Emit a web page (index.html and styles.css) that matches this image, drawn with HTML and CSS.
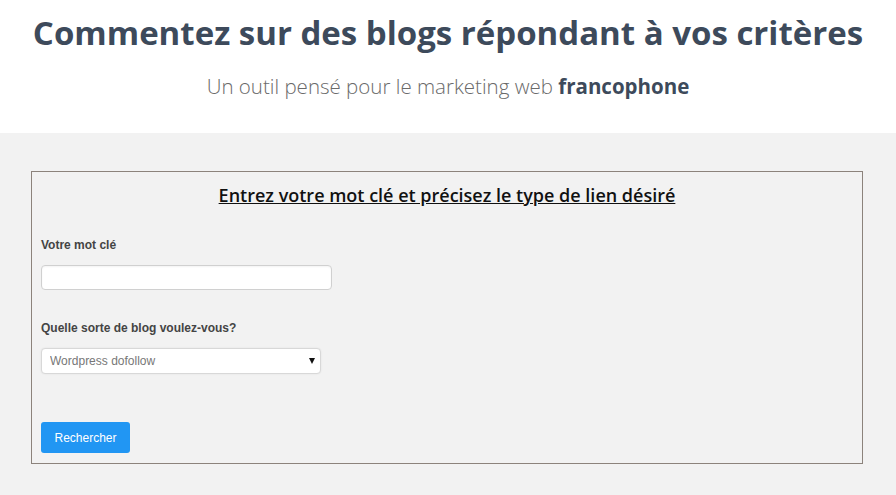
FILE: index.html
```html
<!DOCTYPE html>
<html>
<head>
    <title>Commentez sur des blogs</title>
    <link rel="stylesheet" href="styles.css">
</head>
<body>
    <header class="hero">
        <h1 class="hero-title">Commentez sur des blogs répondant à vos critères</h1>
        <p class="hero-sub">Un outil pensé pour le marketing web <strong>francophone</strong></p>
    </header>
    <main class="search-area">
        <form class="search-box">
            <h2 class="search-heading">Entrez votre mot clé et précisez le type de lien désiré</h2>
            <label class="field-label" for="keyword">Votre mot clé</label>
            <input type="text" id="keyword" class="field-input">
            <label class="field-label" for="blogType">Quelle sorte de blog voulez-vous?</label>
            <div class="select-wrap">
                <select id="blogType" class="field-select">
                    <option>Wordpress dofollow</option>
                    <option>Wordpress nofollow</option>
                </select>
            </div>
            <button type="button" class="search-button">Rechercher</button>
        </form>
    </main>
</body>
</html>
```

FILE: styles.css
```css
html, body {
    margin: 0;
    padding: 0;
}
body {
    background: #f2f2f2;
    font-family: "Open Sans", sans-serif;
}
.hero {
    background: #fff;
    height: 133px;
    text-align: center;
    padding-top: 10px;
    box-sizing: border-box;
}
.hero-title {
    margin: 0;
    font-size: 33px;
    font-weight: 700;
    color: #3d4a5b;
    line-height: 46px;
}
.hero-sub {
    margin: 16px 0 0;
    font-size: 20.5px;
    font-weight: 300;
    color: #6a6a6a;
    line-height: 28px;
}
.hero-sub strong {
    font-weight: 700;
    color: #3d4a5b;
}
.search-area {
    padding: 38px 33px 30px 31px;
}
.search-box {
    border: 1px solid #8c837c;
    padding: 10px 9px 10px;
    display: flex;
    flex-direction: column;
    align-items: flex-start;
    height: 271px;
}
.search-heading {
    align-self: stretch;
    text-align: center;
    margin: 0 0 30px;
    font-size: 18px;
    font-weight: 600;
    color: #111;
    text-decoration: underline;
    line-height: 26px;
}
.field-label {
    font-family: "Liberation Sans", Arial, sans-serif;
    font-size: 12px;
    font-weight: 700;
    color: #444;
    margin-bottom: 13px;
}
.field-input {
    width: 291px;
    height: 25px;
    box-sizing: border-box;
    border: 1px solid #d0d0d0;
    border-radius: 4px;
    background: #fff;
    box-shadow: inset 0 1px 2px rgba(0,0,0,0.05);
    margin-bottom: 31px;
}
.select-wrap {
    position: relative;
    margin-bottom: 48px;
}
.select-wrap::after {
    content: "";
    position: absolute;
    right: 6px;
    top: 10px;
    border-left: 3px solid transparent;
    border-right: 3px solid transparent;
    border-top: 6px solid #111;
    pointer-events: none;
}
.field-select {
    display: block;
    width: 280px;
    height: 26px;
    box-sizing: border-box;
    border: 1px solid #d8d8d8;
    border-radius: 4px;
    background: #fff;
    font-family: "Liberation Sans", Arial, sans-serif;
    font-size: 12px;
    color: #777;
    padding: 0 8px;
    appearance: none;
    -webkit-appearance: none;
    box-shadow: 0 0 2px rgba(0,0,0,0.08);
}
.search-button {
    width: 89px;
    height: 31px;
    padding: 0;
    border: none;
    border-radius: 3px;
    background: #2196f3;
    color: #fff;
    font-family: "Liberation Sans", Arial, sans-serif;
    font-size: 12px;
    cursor: pointer;
}
```
